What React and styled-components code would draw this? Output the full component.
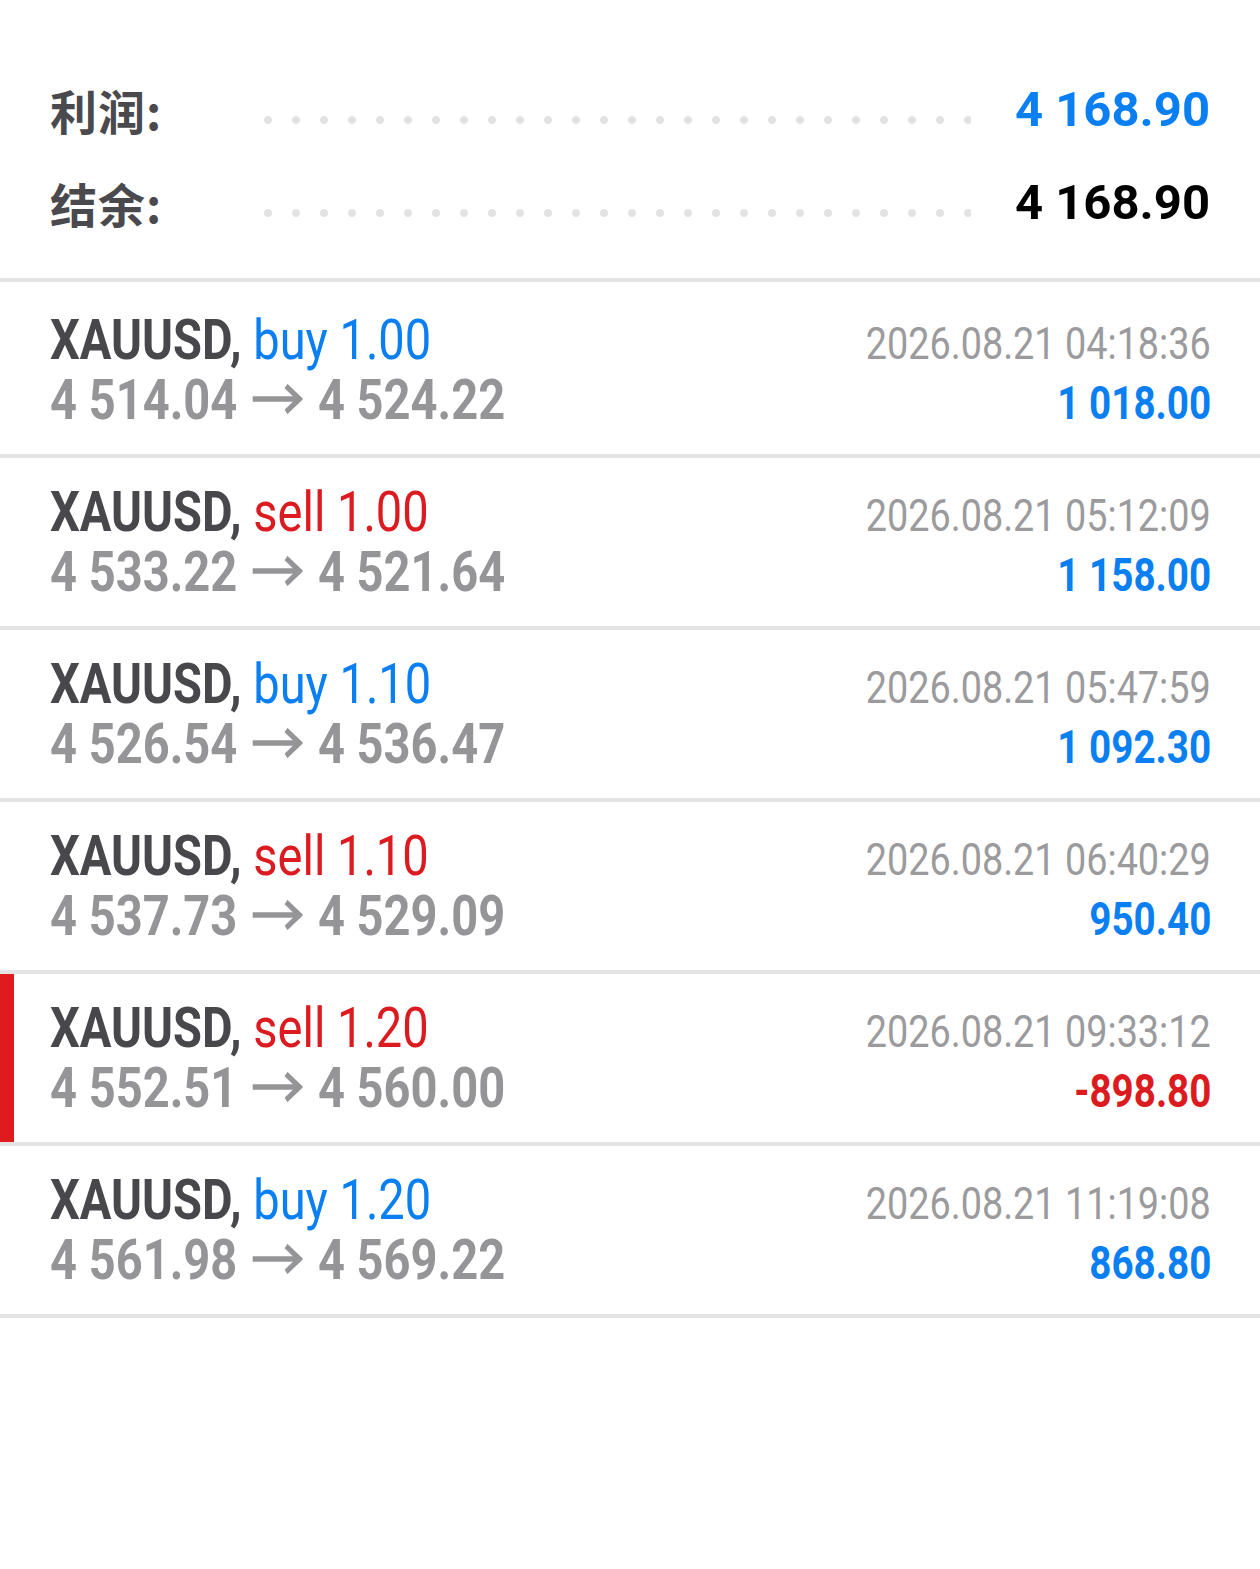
import React from "react";
import styled, { createGlobalStyle } from "styled-components";

const GlobalStyle = createGlobalStyle`
  html, body {
    margin: 0;
    padding: 0;
    background: #fff;
  }
  body {
    font-family: Roboto, "Noto Sans", sans-serif;
  }
`;

const Page = styled.div`
  width: 1260px;
  min-height: 1569px;
  background: #fff;
`;

const Summary = styled.div`
  padding: 63px 50px 29px 50px;
  border-bottom: 4px solid #e4e4e4;
`;

const SummaryRow = styled.div`
  display: flex;
  align-items: center;
  height: 93px;
`;

const Label = styled.div`
  width: 214px;
  font-family: "Noto Sans CJK SC", "Noto Sans", sans-serif;
  font-weight: 700;
  font-size: 47px;
  color: #4a4a4e;
  letter-spacing: 1px;
`;

const Dots = styled.div`
  flex: 1;
  align-self: stretch;
  margin-right: 44px;
  background-image: radial-gradient(circle, #e3e3e3 3.6px, transparent 4.4px);
  background-size: 28px 10px;
  background-repeat: repeat-x;
  background-position: -10px ${(p) => p.$dotY}px;
`;

const Total = styled.div`
  font-family: Roboto, sans-serif;
  font-weight: 700;
  font-size: 49px;
  color: ${(p) => p.$color};
`;

const List = styled.div`
  padding-top: 4px;
`;

const Deal = styled.div`
  padding: 24px 49px 0 50px;
  height: 144px;
  border-bottom: 4px solid #e4e4e4;
  box-shadow: ${(p) => (p.$flag ? "inset 14px 0 0 #e01b1f" : "none")};
`;

const Line = styled.div`
  display: flex;
  justify-content: space-between;
  align-items: baseline;
  height: 60px;
  line-height: 60px;
  white-space: nowrap;
`;

const Cond = styled.span`
  display: inline-block;
  font-family: Roboto, sans-serif;
  font-size: ${(p) => p.$size}px;
  font-weight: ${(p) => p.$weight || 400};
  color: ${(p) => p.$color};
  transform: scaleX(0.84);
  transform-origin: ${(p) => (p.$right ? "right" : "left")} center;
`;

const Tone = styled.span`
  font-weight: 400;
  color: ${(p) => p.$color};
`;

const Arrow = styled.svg`
  width: 60px;
  height: 30px;
  margin: 0 18px;
  vertical-align: 5px;
`;

const BLUE = "#0a7ff2";
const RED = "#dc1b20";
const DARK = "#48484c";
const GRAY = "#959597";
const DATE = "#9b9b9d";

const deals = [
  { side: "buy", vol: "1.00", open: "4 514.04", close: "4 524.22", time: "2026.08.21 04:18:36", profit: "1 018.00" },
  { side: "sell", vol: "1.00", open: "4 533.22", close: "4 521.64", time: "2026.08.21 05:12:09", profit: "1 158.00" },
  { side: "buy", vol: "1.10", open: "4 526.54", close: "4 536.47", time: "2026.08.21 05:47:59", profit: "1 092.30" },
  { side: "sell", vol: "1.10", open: "4 537.73", close: "4 529.09", time: "2026.08.21 06:40:29", profit: "950.40" },
  { side: "sell", vol: "1.20", open: "4 552.51", close: "4 560.00", time: "2026.08.21 09:33:12", profit: "-898.80", flag: true },
  { side: "buy", vol: "1.20", open: "4 561.98", close: "4 569.22", time: "2026.08.21 11:19:08", profit: "868.80" },
];

// arrow between open and close price, drawn wider since the parent is squeezed by scaleX
const PriceArrow = () => (
  <Arrow viewBox="0 0 60 30">
    <path d="M0 15H56" stroke={GRAY} strokeWidth="5.5" fill="none" />
    <path d="M40 2L56 15L40 28" stroke={GRAY} strokeWidth="5.5" fill="none" strokeLinejoin="miter" />
  </Arrow>
);

export default function App() {
  return (
    <Page>
      <GlobalStyle />
      <Summary>
        <SummaryRow>
          <Label>利润:</Label>
          <Dots $dotY={52} />
          <Total $color={BLUE}>4 168.90</Total>
        </SummaryRow>
        <SummaryRow>
          <Label>结余:</Label>
          <Dots $dotY={52} />
          <Total $color="#000">4 168.90</Total>
        </SummaryRow>
      </Summary>
      <List>
        {deals.map((d, i) => {
          const loss = d.profit.startsWith("-");
          return (
            <Deal key={i} $flag={d.flag}>
              <Line>
                <Cond $size={56} $weight={700} $color={DARK}>
                  XAUUSD,{" "}
                  <Tone $color={d.side === "buy" ? BLUE : RED}>
                    {d.side} {d.vol}
                  </Tone>
                </Cond>
                <Cond $size={45} $color={DATE} $right>
                  {d.time}
                </Cond>
              </Line>
              <Line>
                <Cond $size={56} $weight={700} $color={GRAY}>
                  {d.open}
                  <PriceArrow />
                  {d.close}
                </Cond>
                <Cond $size={46} $weight={700} $color={loss ? RED : BLUE} $right>
                  {d.profit}
                </Cond>
              </Line>
            </Deal>
          );
        })}
      </List>
    </Page>
  );
}
